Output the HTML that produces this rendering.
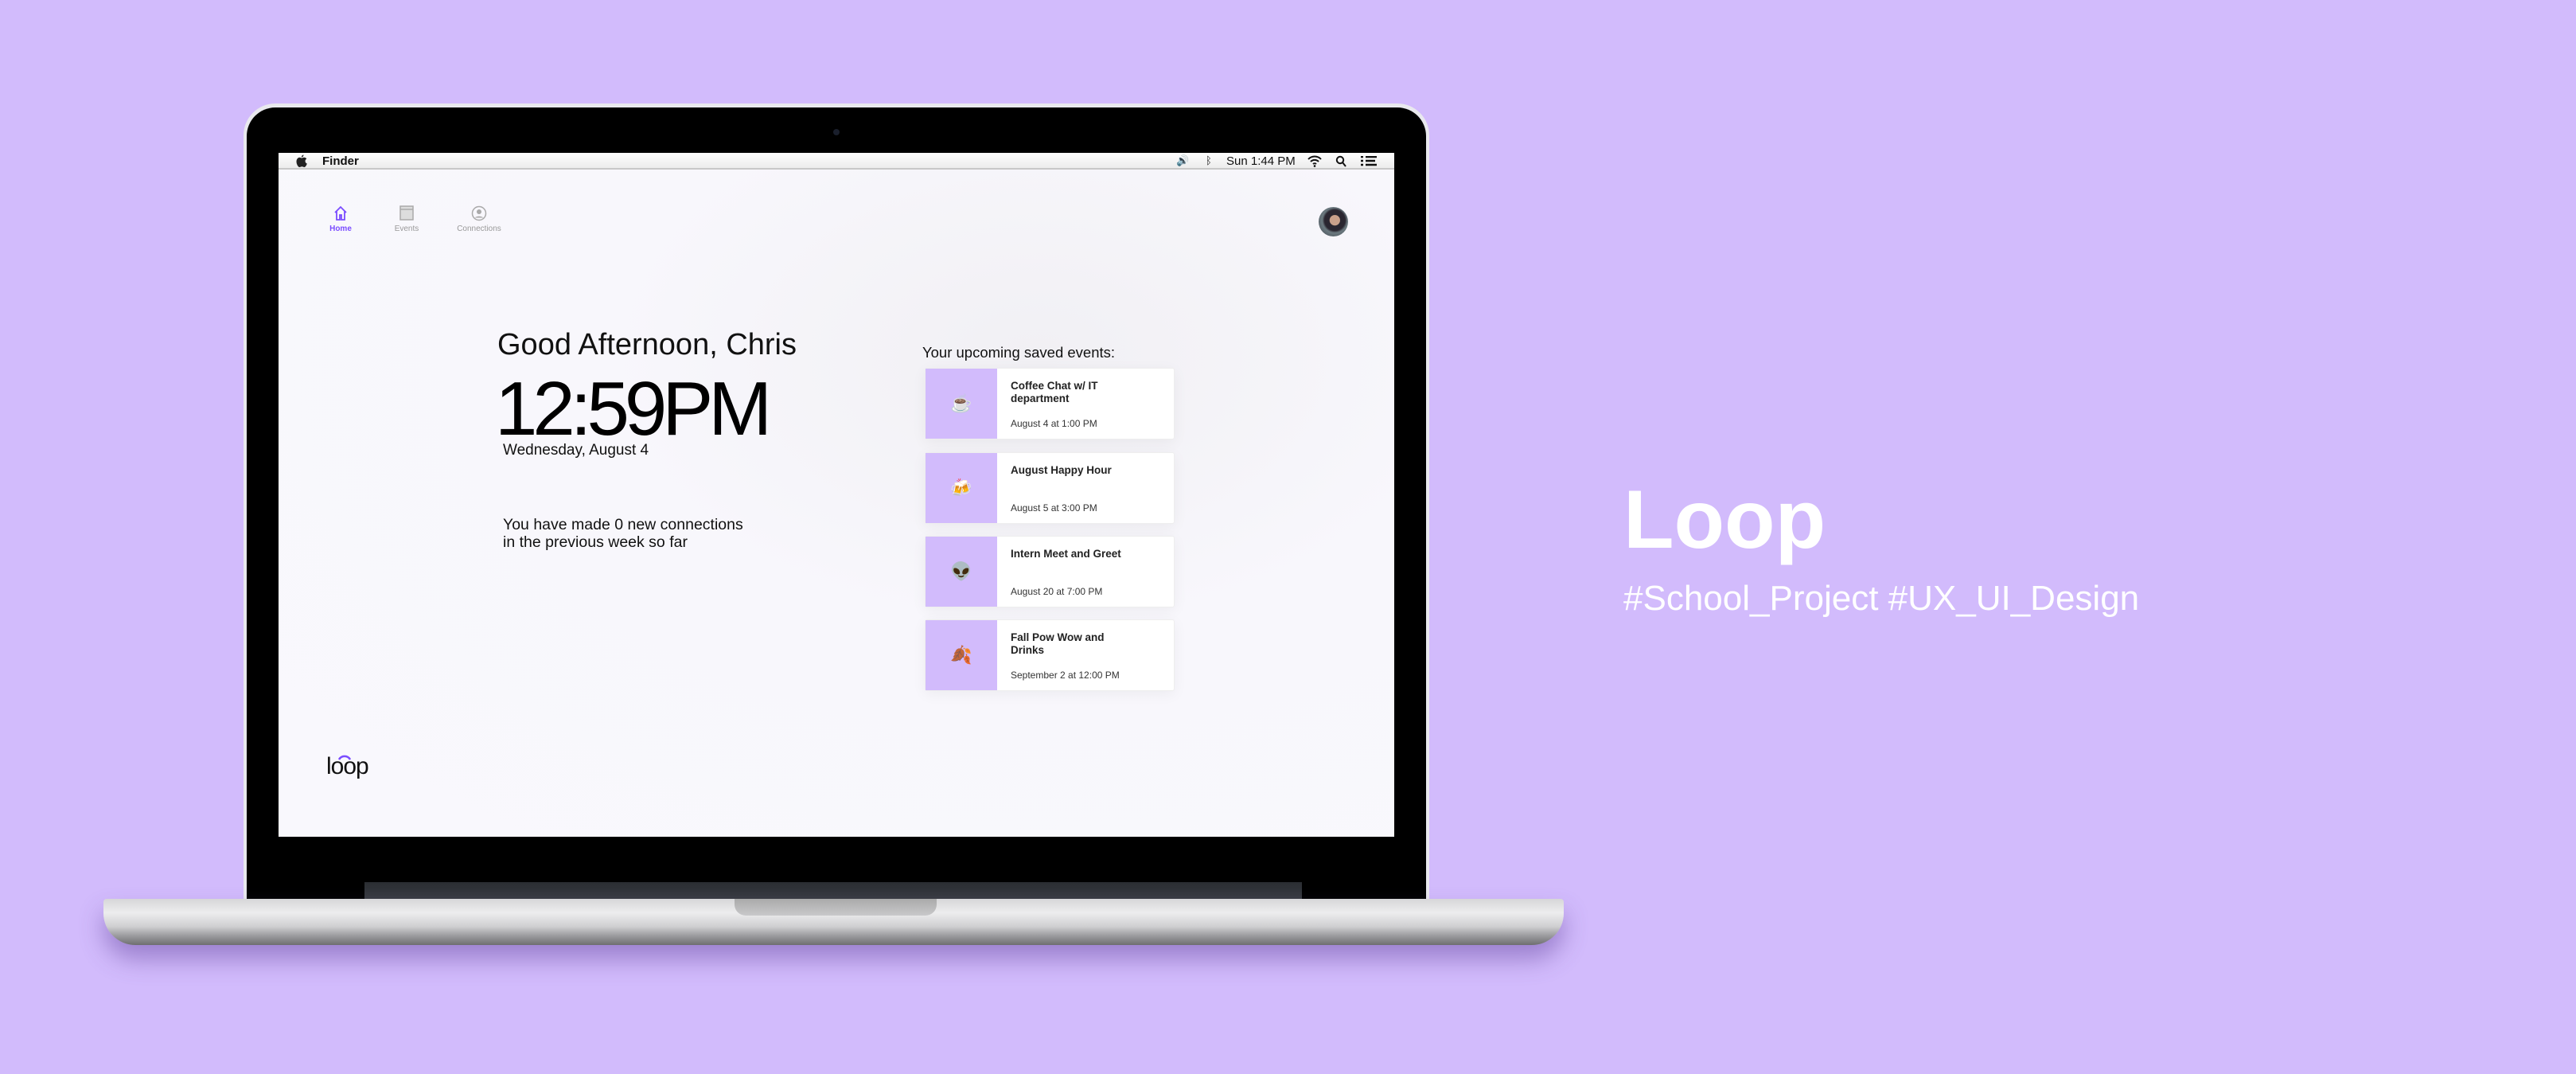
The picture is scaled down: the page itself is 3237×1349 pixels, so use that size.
<!DOCTYPE html>
<html><head><meta charset="utf-8"><style>
*{margin:0;padding:0;box-sizing:border-box}
body{width:3237px;height:1349px;background:#d2bbfc;position:relative;overflow:hidden;font-family:"Liberation Sans",sans-serif}
.abs{position:absolute}
.lid{left:306px;top:130px;width:1490px;height:1010px;border-radius:40px 40px 0 0;background:#e9e9ee;}
.bezel{left:310px;top:135px;width:1482px;height:1000px;border-radius:36px 36px 0 0;background:#000}
.screen{left:350px;top:192px;width:1402px;height:859px;background:radial-gradient(ellipse at 68% 30%,#f1f0f4 0%,#f8f7fc 40%,#f9f8fd 100%);overflow:hidden}
.menubar{left:0;top:0;width:1402px;height:21px;background:linear-gradient(#fff,#ececec);border-bottom:2px solid #c8c8c8;font-size:15px;color:#111}
.base{left:130px;top:1129px;width:1835px;height:58px;border-radius:4px 4px 40px 40px;background:linear-gradient(#d6d6d8 0%,#ededee 30%,#cfcfd1 60%,#9b9b9e 80%,#6e6e70 100%);box-shadow:0 18px 30px rgba(90,60,150,.45)}
.notch{left:923px;top:1129px;width:254px;height:21px;border-radius:0 0 14px 14px;background:linear-gradient(#aaa,#c8c8ca)}
.hinge{left:458px;top:1108px;width:1178px;height:22px;background:linear-gradient(#2a2d32,#3a3d42)}
.card{position:absolute;left:812px;width:314px;height:90px;background:#fff;border:1px solid #eee;border-radius:3px;box-shadow:0 4px 18px rgba(0,0,0,.05)}
.card .ic{position:absolute;left:0;top:0;width:90px;height:100%;background:#d2bbfc;display:flex;align-items:center;justify-content:center;font-size:22px}
.card .t{position:absolute;left:107px;top:14px;font-size:13.5px;font-weight:bold;color:#222;line-height:16px;width:140px}
.card .d{position:absolute;left:107px;top:62px;font-size:12px;color:#333}
.nav{position:absolute;font-size:10px;color:#999;text-align:center;width:90px}
</style></head><body>
<div class="abs lid"></div>
<div class="abs bezel"></div>
<div class="abs" style="left:1047px;top:162px;width:8px;height:8px;border-radius:50%;background:#1a1f2c"></div>
<div class="abs hinge"></div>
<div class="abs screen">
 <div class="abs menubar">
  <svg class="abs" style="left:22px;top:2px" width="14" height="17" viewBox="0 0 14 17"><path d="M9.5 0.5c0 1.5-1.2 3-2.7 3 0-1.5 1.2-3 2.7-3zM7 4.5c1 0 2-.7 3.2-.7 1.3 0 2.5.7 3.1 1.7-2.6 1.4-2.2 5 .5 6-.6 1.8-1.8 4.5-3.4 4.5-1.2 0-1.5-.7-3-.7s-1.9.7-3 .7C2.7 16 .5 12.3.5 9 .5 6 2.4 3.8 4.5 3.8 5.6 3.8 6.2 4.5 7 4.5z" fill="#222"/></svg>
  <span class="abs" style="left:55px;top:2px;font-weight:bold">Finder</span>
  <span class="abs" style="left:1128px;top:2px;font-size:13px">&#128266;</span>
  <span class="abs" style="left:1165px;top:2px;font-size:13px">&#x16D2;</span>
  <span class="abs" style="left:1191px;top:2px">Sun 1:44 PM</span>
  <svg class="abs" style="left:1292px;top:3px" width="20" height="15" viewBox="0 0 20 15"><path d="M2 5a11 11 0 0 1 16 0M5 8a7 7 0 0 1 10 0M8 11a3 3 0 0 1 4 0" stroke="#111" stroke-width="2" fill="none"/><circle cx="10" cy="13.5" r="1.3"/></svg>
  <svg class="abs" style="left:1328px;top:3px" width="14" height="15" viewBox="0 0 14 15"><circle cx="6" cy="6" r="4.2" stroke="#111" stroke-width="2" fill="none"/><path d="M9 9l4 5" stroke="#111" stroke-width="2"/></svg>
  <svg class="abs" style="left:1360px;top:4px" width="20" height="13" viewBox="0 0 20 13"><path d="M0 1h3M6 1h14M0 6h3M6 6h12M0 11h3M6 11h14" stroke="#111" stroke-width="2.4"/></svg>
 </div>
 <svg class="abs" style="left:69px;top:66px" width="18" height="20" viewBox="0 0 18 20"><path d="M2 9L9 2l7 7M4 7v11h4v-6h2v6h4V7" stroke="#7b4dff" stroke-width="1.8" fill="none"/></svg>
 <div class="nav" style="left:33px;top:90px;color:#7b4dff;font-weight:bold">Home</div>
 <svg class="abs" style="left:152px;top:66px" width="18" height="19" viewBox="0 0 18 19"><rect x="1" y="1" width="16" height="17" fill="#ddd" stroke="#aaa" stroke-width="1.5"/><path d="M1 5h16" stroke="#aaa" stroke-width="1.5"/></svg>
 <div class="nav" style="left:116px;top:90px">Events</div>
 <svg class="abs" style="left:242px;top:66px" width="20" height="20" viewBox="0 0 20 20"><circle cx="10" cy="10" r="8.5" stroke="#aaa" stroke-width="1.5" fill="none"/><circle cx="10" cy="8" r="3" fill="#aaa"/><path d="M4.5 15.5a7 5 0 0 1 11 0" fill="#aaa"/></svg>
 <div class="nav" style="left:207px;top:90px">Connections</div>
 <div class="abs" style="left:1307px;top:68px;width:37px;height:37px;border-radius:50%;background:radial-gradient(circle at 55% 45%,#c9a08a 0 22%,#2a2630 24% 45%,#6c7a80 55%,#3a4048 100%)"></div>

 <div class="abs" style="left:275px;top:220px;font-size:38px;color:#111">Good Afternoon, Chris</div>
 <div class="abs" style="left:272px;top:272px;font-size:96px;color:#000;letter-spacing:-6px;line-height:100px">12:59PM</div>
 <div class="abs" style="left:282px;top:363px;font-size:19px;color:#111">Wednesday, August 4</div>
 <div class="abs" style="left:282px;top:456px;font-size:19.5px;color:#111;line-height:22px">You have made 0 new connections<br>in the previous week so far</div>
 <div class="abs" style="left:809px;top:240px;font-size:18.5px;color:#111">Your upcoming saved events:</div>
 <div class="card" style="top:270px"><div class="ic">☕</div><div class="t">Coffee Chat w/ IT department</div><div class="d">August 4 at 1:00 PM</div></div>
 <div class="card" style="top:376px"><div class="ic">🍻</div><div class="t">August Happy Hour</div><div class="d">August 5 at 3:00 PM</div></div>
 <div class="card" style="top:481px"><div class="ic">👽</div><div class="t">Intern Meet and Greet</div><div class="d">August 20 at 7:00 PM</div></div>
 <div class="card" style="top:586px"><div class="ic">🍂</div><div class="t">Fall Pow Wow and Drinks</div><div class="d">September 2 at 12:00 PM</div></div>

 <svg class="abs" style="left:68px;top:751px" width="30" height="12" viewBox="0 0 30 12"><path d="M8 11a8 8 0 0 1 14 0" stroke="#7b4dff" stroke-width="2.5" fill="none"/></svg>
 <div class="abs" style="left:60px;top:754px;font-size:30px;color:#111;letter-spacing:-1px">loop</div>
</div>
<div class="abs base"></div>
<div class="abs notch"></div>
<div class="abs" style="left:2040px;top:594px;font-size:104px;font-weight:bold;color:#fff">Loop</div>
<div class="abs" style="left:2040px;top:727px;font-size:44px;color:#fff">#School_Project #UX_UI_Design</div>
</body></html>
